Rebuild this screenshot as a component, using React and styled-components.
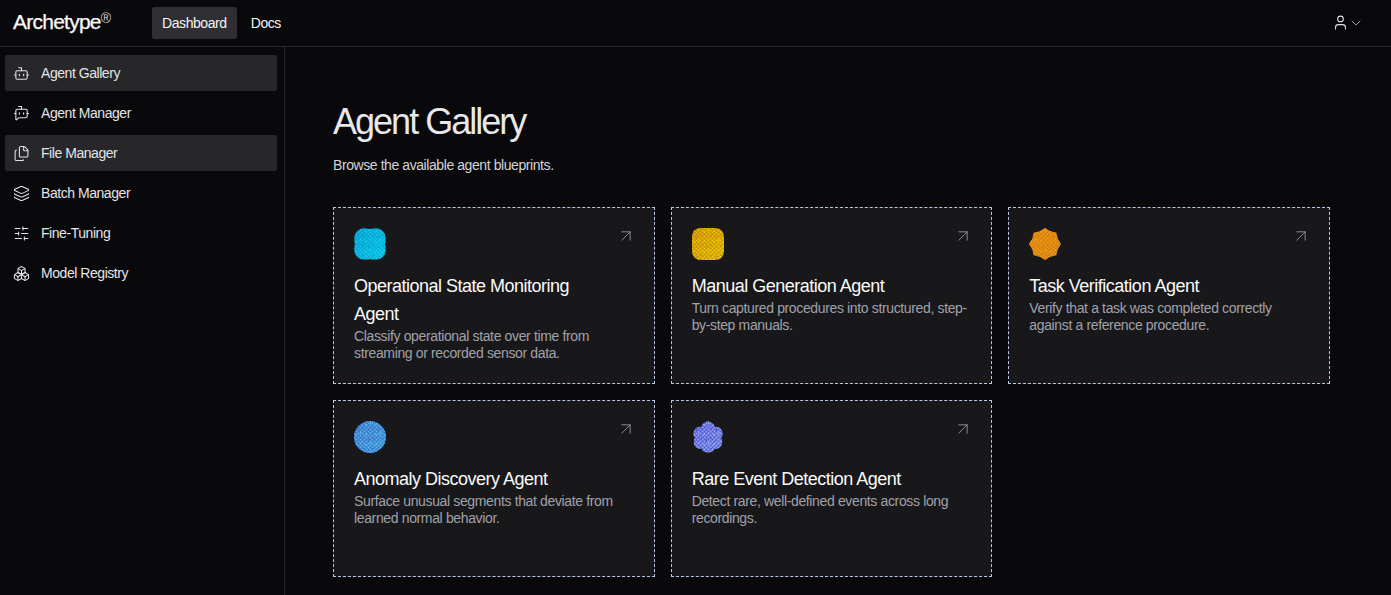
import React from "react";
import styled, { createGlobalStyle } from "styled-components";
import { Bot, BotMessageSquare, Files, Layers, SlidersHorizontal, Boxes, ArrowUpRight, User, ChevronDown } from "lucide-react";

const Global = createGlobalStyle`
  html, body { margin: 0; padding: 0; height: 100%; background: #09090b; overflow: hidden; }
  #root { height: 100%; }
  * { box-sizing: border-box; }
`;

const Page = styled.div`
  height: 595px;
  display: flex;
  flex-direction: column;
  font-family: "Liberation Sans", Arial, sans-serif;
  color: #fafafa;
  background: #09090b;
  -webkit-font-smoothing: antialiased;
`;

const Header = styled.header`
  height: 47px;
  flex: none;
  display: flex;
  align-items: center;
  padding: 0 27px 0 13px;
  border-bottom: 1px solid #27272a;
`;

const Logo = styled.div`
  width: 139px;
  font-size: 21px;
  font-weight: 400;
  letter-spacing: -0.75px;
  display: flex;
  align-items: flex-start;
  line-height: 24px;
  margin-top: -3px;
  -webkit-text-stroke: 0.25px #fafafa;
`;

const LogoMark = styled.span`
  font-size: 14px;
  line-height: 16px;
  letter-spacing: 0;
  margin-left: 0;
  color: #d4d4d8;
  -webkit-text-stroke: 0;
`;

const Tabs = styled.nav`
  display: flex;
  gap: 4px;
`;

const Tab = styled.a`
  height: 32px;
  padding: 0 10px;
  display: flex;
  align-items: center;
  font-size: 14px;
  letter-spacing: -0.42px;
  border-radius: 2px;
  color: #f4f4f5;
  background: ${(p) => (p.$active ? "#2e2e33" : "transparent")};
`;

const UserMenu = styled.div`
  margin-left: auto;
  display: flex;
  align-items: center;
  color: #e4e4e7;
  margin-top: -1px;
`;

const Chevron = styled(ChevronDown)`
  margin-left: -1px;
`;

const Body = styled.div`
  flex: 1;
  display: flex;
  min-height: 0;
`;

const Sidebar = styled.aside`
  width: 285px;
  flex: none;
  border-right: 1px solid #27272a;
  padding: 8px 7px 0 5px;
  display: flex;
  flex-direction: column;
  gap: 4px;
`;

const NavItem = styled.a`
  height: 36px;
  display: flex;
  align-items: center;
  gap: 11px;
  padding: 0 8px;
  border-radius: 2px;
  font-size: 14px;
  letter-spacing: -0.45px;
  color: #e4e4e7;
  background: ${(p) => (p.$active ? "#27272a" : "transparent")};
`;

const Main = styled.main`
  flex: 1;
  padding: 53px 61px 0 48px;
`;

const Title = styled.h1`
  margin: 0;
  font-size: 36px;
  line-height: 44px;
  font-weight: 400;
  letter-spacing: -1.98px;
  color: #e8e8ea;
`;

const Subtitle = styled.p`
  margin: 11px 0 0;
  font-size: 14px;
  line-height: 20px;
  letter-spacing: -0.42px;
  color: #d4d4d8;
`;

const Grid = styled.div`
  margin-top: 32px;
  display: grid;
  grid-template-columns: repeat(3, 1fr);
  grid-auto-rows: 177px;
  gap: 16px;
`;

const Card = styled.article`
  position: relative;
  background: #18181b;
  border: 1px dashed #b9c6e6;
  padding: 20px;
  display: flex;
  flex-direction: column;
`;

const Corner = styled.span`
  position: absolute;
  top: 18px;
  right: 18px;
  color: #a1a1aa;
  display: flex;
`;

const BlobWrap = styled.div`
  height: 32px;
  width: 32px;
  flex: none;
`;

const CardTitle = styled.h2`
  margin: 12px 0 0;
  padding-right: 20px;
  font-size: 18px;
  line-height: 28px;
  font-weight: 400;
  letter-spacing: -0.5px;
  color: #fafafa;
`;

const CardText = styled.p`
  margin: 0;
  font-size: 14px;
  line-height: 17px;
  letter-spacing: -0.36px;
  color: #a1a1aa;
`;

const star = (n, R, r) => {
  const pts = [];
  for (let i = 0; i < n * 2; i++) {
    const a = (Math.PI * i) / n - Math.PI / 2;
    const rad = i % 2 ? r : R;
    pts.push(`${(16 + rad * Math.cos(a)).toFixed(2)},${(16 + rad * Math.sin(a)).toFixed(2)}`);
  }
  return pts.join(" ");
};

const shapes = {
  notched: <path d="M9 .5C11.500.3 14 .5 16 1 18 .5 20.500.3 23 .5 27.500 1 31 4.500 31.500 9 31.700 11.500 31.500 14 31 16 31.500 18 31.700 20.500 31.500 23 31 27.500 27.500 31 23 31.500 20.500 31.700 18 31.500 16 31 14 31.500 11.500 31.700 9 31.500 4.500 31 1 27.500.5 23 .3 20.500.5 18 1 16 .5 14 .3 11.500.5 9 1 4.500 4.500 1 9 .5Z" />,
  square: <path d="M16 0C24 0 27 0 30 3 32 6 32 9 32 16 32 24 32 27 29 30 26 32 23 32 16 32 8 32 5 32 2.500 29.500 0 27 0 24 0 16 0 8 0 5 2.500 2.500 5 0 8 0 16 0Z" />,
  star: <polygon points={star(8, 16, 13.8)} />,
  circle: <circle cx="16" cy="16" r="16" />,
  flower: <path d="M16 .5C19.300.5 22 2.800 22.600 5.800 26 5.200 29.200 7 30.200 10.400 31.200 13.500 30 15.600 29 16.600 30.300 18.800 30.800 21.800 29.300 24.600 27.800 27.200 25.200 28.400 22.700 27.800 21.800 30 19.300 31.500 16 31.500 12.700 31.500 10.200 30 9.300 27.800 6.800 28.400 4.200 27.200 2.700 24.600 1.200 21.800 1.700 18.800 3 16.600 2 15.600 .8 13.500 1.800 10.400 2.800 7 6 5.200 9.400 5.800 10 2.800 12.700.5 16 .5Z" />,
};

const Blob = ({ id, shape, from, to, dot, dot2 }) => (
  <svg width="32" height="32" viewBox="0 0 32 32" aria-hidden="true">
    <defs>
      <linearGradient id={`g-${id}`} x1="0" y1="0" x2="1" y2="1">
        <stop offset="0" stopColor={from} />
        <stop offset="1" stopColor={to} />
      </linearGradient>
      <pattern id={`p-${id}`} width="4" height="4" patternUnits="userSpaceOnUse">
        <rect x="0" y="0" width="1" height="1" fill={dot} />
        <rect x="2" y="2" width="1" height="1" fill={dot} />
        <rect x="2" y="0" width="1" height="1" fill={dot2} />
        <rect x="0" y="2" width="1" height="1" fill={dot2} />
      </pattern>
      <pattern id={`n-${id}`} width="10" height="10" patternUnits="userSpaceOnUse">
        <rect x="1" y="3" width="2" height="1" fill={dot} />
        <rect x="6" y="1" width="1" height="2" fill={dot} />
        <rect x="8" y="7" width="2" height="1" fill={dot2} />
        <rect x="4" y="8" width="1" height="2" fill={dot2} />
      </pattern>
      <clipPath id={`c-${id}`}>{shapes[shape]}</clipPath>
    </defs>
    <g clipPath={`url(#c-${id})`}>
      <rect width="32" height="32" fill={`url(#g-${id})`} />
      <rect width="32" height="32" fill={`url(#p-${id})`} />
      <rect width="32" height="32" fill={`url(#n-${id})`} />
    </g>
  </svg>
);

const nav = [
  ["Agent Gallery", Bot, true],
  ["Agent Manager", BotMessageSquare, false],
  ["File Manager", Files, true],
  ["Batch Manager", Layers, false],
  ["Fine-Tuning", SlidersHorizontal, false],
  ["Model Registry", Boxes, false],
];

const cards = [
  { t: "Operational State Monitoring Agent", d: "Classify operational state over time from streaming or recorded sensor data.", b: { shape: "notched", from: "#0c9cd4", to: "#00d4ea", dot: "#16c8ec", dot2: "#0aa0cc" } },
  { t: "Manual Generation Agent", d: "Turn captured procedures into structured, step-by-step manuals.", b: { shape: "square", from: "#d88c08", to: "#dcc000", dot: "#f0c800", dot2: "#c09010" } },
  { t: "Task Verification Agent", d: "Verify that a task was completed correctly against a reference procedure.", b: { shape: "star", from: "#e88a10", to: "#d88a14", dot: "#f5a000", dot2: "#c87c20" } },
  { t: "Anomaly Discovery Agent", d: "Surface unusual segments that deviate from learned normal behavior.", b: { shape: "circle", from: "#3f7edc", to: "#3aa4dc", dot: "#5cbcf0", dot2: "#4a70c0" } },
  { t: "Rare Event Detection Agent", d: "Detect rare, well-defined events across long recordings.", b: { shape: "flower", from: "#6268e4", to: "#6a94e8", dot: "#a8a4f4", dot2: "#5058c8" } },
];

export default function App() {
  return (
    <Page>
      <Global />
      <Header>
        <Logo>
          Archetype<LogoMark>®</LogoMark>
        </Logo>
        <Tabs>
          <Tab $active>Dashboard</Tab>
          <Tab>Docs</Tab>
        </Tabs>
        <UserMenu>
          <User size={17} strokeWidth={1.5} />
          <Chevron size={16} strokeWidth={1} />
        </UserMenu>
      </Header>
      <Body>
        <Sidebar>
          {nav.map(([label, Icon, active]) => (
            <NavItem key={label} $active={active}>
              <Icon size={17} strokeWidth={1.5} />
              {label}
            </NavItem>
          ))}
        </Sidebar>
        <Main>
          <Title>Agent Gallery</Title>
          <Subtitle>Browse the available agent blueprints.</Subtitle>
          <Grid>
            {cards.map((c, i) => (
              <Card key={c.t}>
                <Corner>
                  <ArrowUpRight size={20} strokeWidth={1} />
                </Corner>
                <BlobWrap>
                  <Blob id={i} {...c.b} />
                </BlobWrap>
                <CardTitle>{c.t}</CardTitle>
                <CardText>{c.d}</CardText>
              </Card>
            ))}
          </Grid>
        </Main>
      </Body>
    </Page>
  );
}
